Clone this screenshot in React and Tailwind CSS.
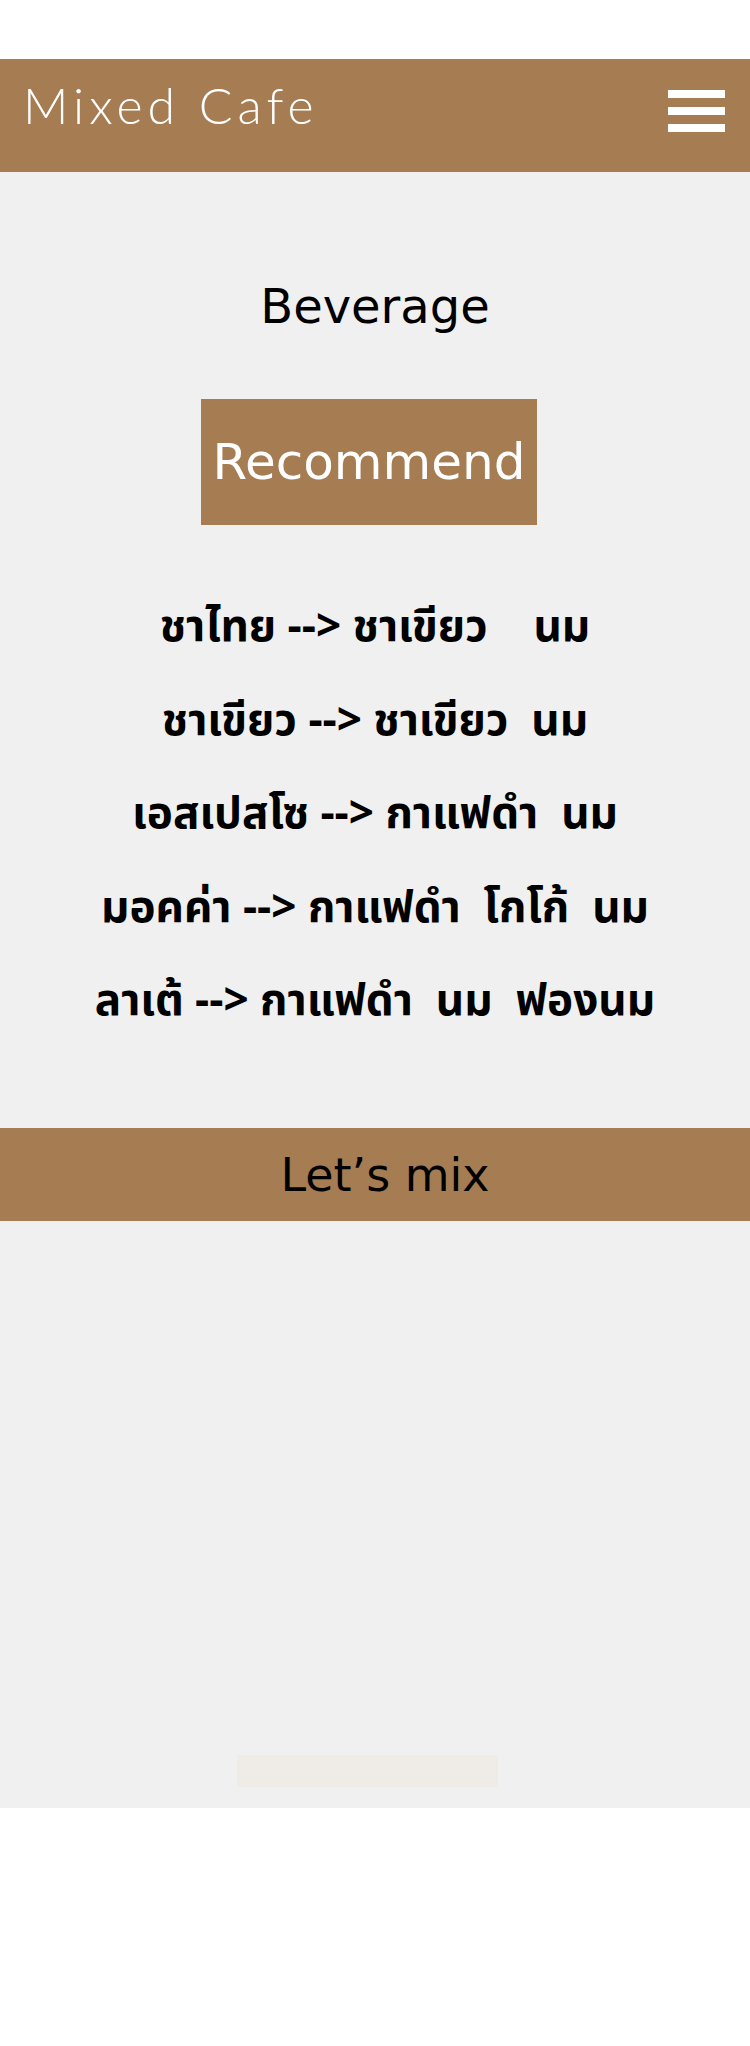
import React from "react";

const latin = { fontFamily: '"DejaVu Sans", "Liberation Sans", sans-serif' };
const thai = { fontFamily: 'Tahoma, "Noto Sans Thai", "Noto Sans", "DejaVu Sans", sans-serif' };

const lines = [
  "ชาไทย --> ชาเขียว    นม",
  "ชาเขียว --> ชาเขียว  นม",
  "เอสเปสโซ --> กาแฟดำ  นม",
  "มอคค่า --> กาแฟดำ  โกโก้  นม",
  "ลาเต้ --> กาแฟดำ  นม  ฟองนม",
];

export default function App() {
  return (
    <div className="min-h-[2046px] bg-white">
      <div className="h-[59px]" />
      <header className="h-[113px] bg-[#a67c52] flex items-start justify-between pl-[23px] pr-[25px]">
        <span
          className="mt-[21px] text-white text-[50px] leading-none font-light tracking-[5px]"
          style={{ fontFamily: 'Lato, "DejaVu Sans", sans-serif' }}
        >
          Mixed Cafe
        </span>
        <div className="mt-[31px] flex flex-col gap-[9px] w-[57px]">
          <div className="h-[8px] bg-white" />
          <div className="h-[8px] bg-white" />
          <div className="h-[8px] bg-white" />
        </div>
      </header>
      <main className="bg-[#f0f0f0] flex flex-col items-center">
        <h2 className="mt-[110px] text-[48px] leading-none text-black" style={latin}>
          Beverage
        </h2>
        <div className="mt-[69px] mr-[12px] w-[336px] h-[126px] bg-[#a67c52] flex items-center justify-center">
          <span className="text-[50px] leading-none text-white" style={latin}>
            Recommend
          </span>
        </div>
        <div className="mt-[73px] flex flex-col items-center gap-[33.5px]">
          {lines.map((l) => (
            <p
              key={l}
              className="text-[44px] leading-[60px] font-bold text-black whitespace-pre"
              style={thai}
            >
              {l}
            </p>
          ))}
        </div>
        <div className="mt-[96px] w-full h-[93px] bg-[#a67c52] flex items-center justify-center pl-[20px]">
          <span className="text-[46px] leading-none text-black" style={latin}>
            Let’s mix
          </span>
        </div>
        <div className="h-[587px] w-full flex items-end justify-center pb-[21px]">
          <div className="w-[261px] h-[32px] bg-[#efebe7] mr-[16px]" />
        </div>
      </main>
    </div>
  );
}
